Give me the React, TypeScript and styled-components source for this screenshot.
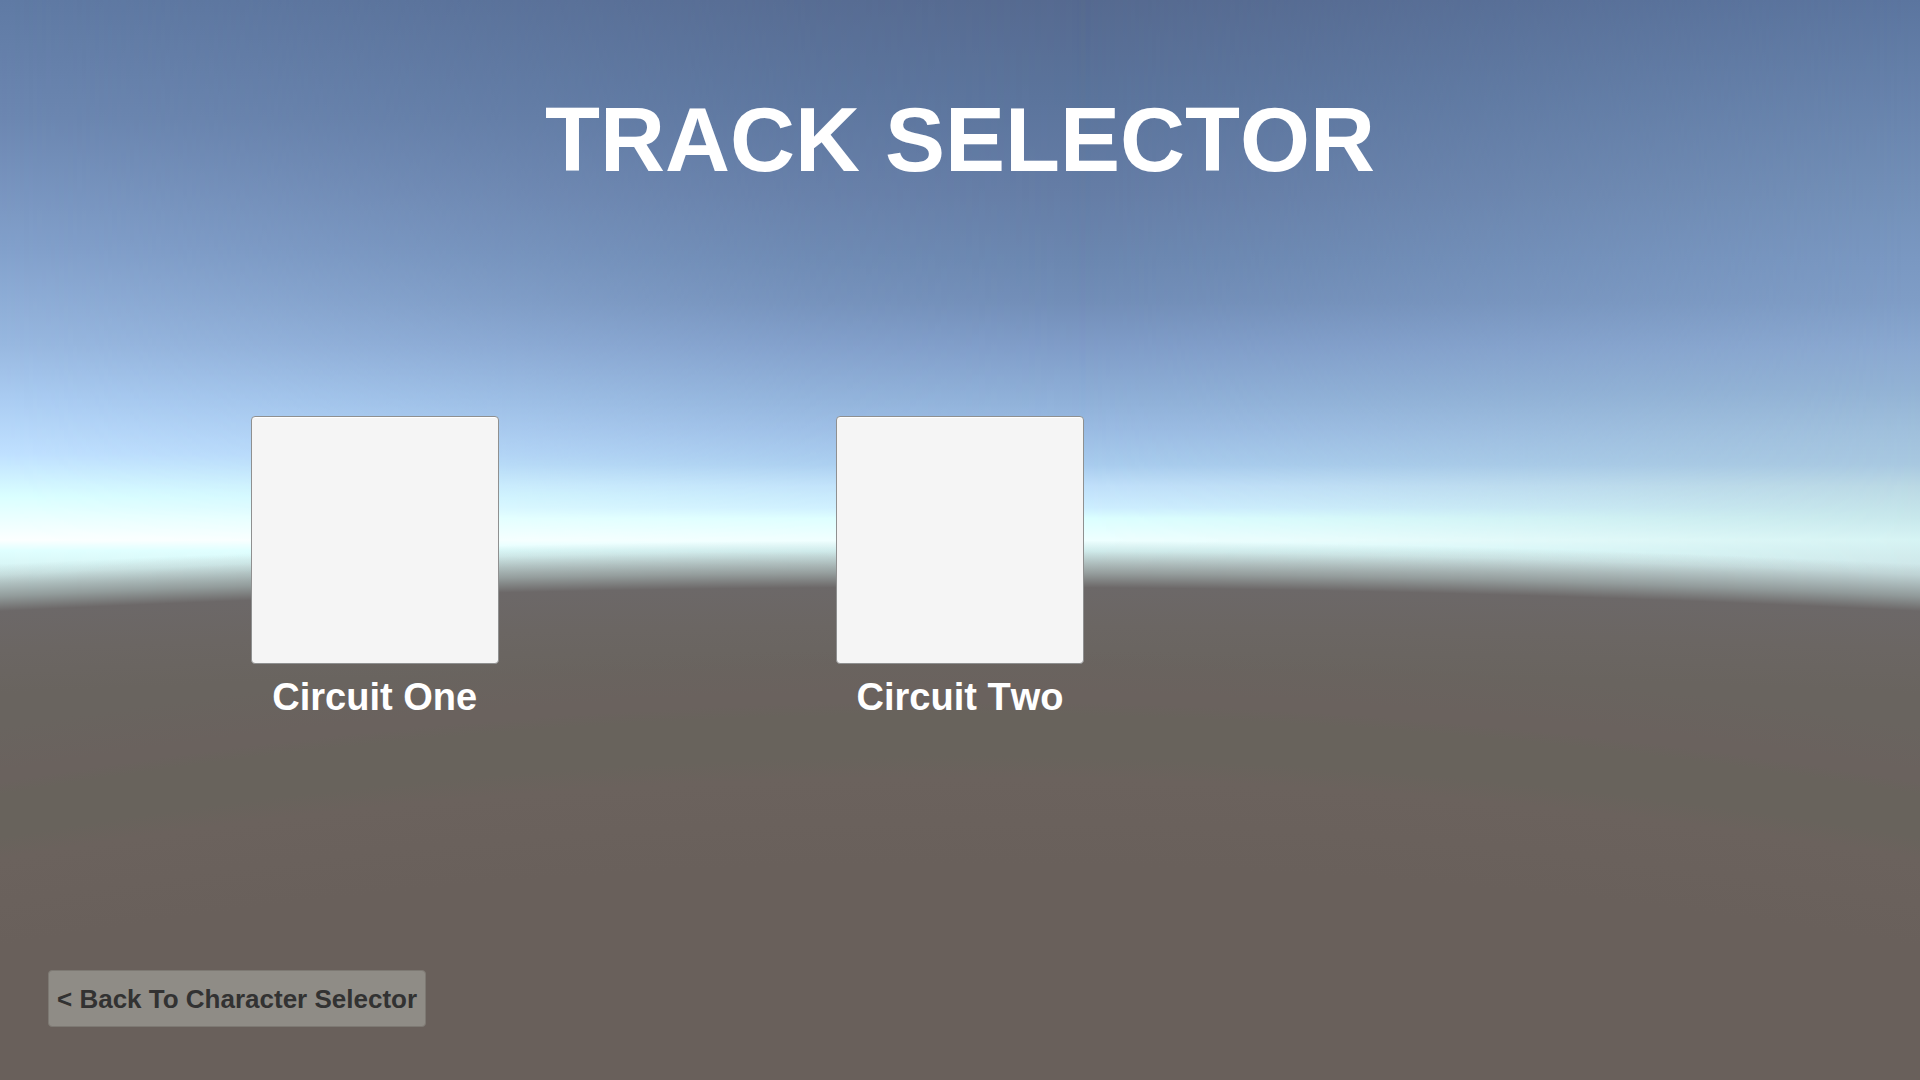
import React from "react";
import styled, { createGlobalStyle } from "styled-components";

const GlobalStyle = createGlobalStyle`
  *, *::before, *::after { box-sizing: border-box; }
  body { margin: 0; }
`;

/* Three vertical colour ramps (left, middle, right) blended across the sky. */
const Sky = styled.div`
  position: absolute;
  inset: 0;
  z-index: -1;
  background: linear-gradient(
    #566a90 0%,
    #5b749c 9%,
    #657da6 18%,
    #6b87b0 24%,
    #728eb8 28%,
    #7f9cc8 32%,
    #8fb0d8 37%,
    #9bbce4 40%,
    #a8ccee 43%,
    #c0e0fa 45%,
    #cdeeff 47%,
    #dcffff 48%,
    #efffff 50%,
    #e0ffff 51%,
    #dcf2f2 53%
  );

  &::before,
  &::after {
    content: "";
    position: absolute;
    inset: 0;
  }

  &::before {
    background: linear-gradient(
      #5f7aa4 0%,
      #6c87b1 11%,
      #82a0cb 23%,
      #98b8e0 32%,
      #aaccf2 37%,
      #bfe0ff 42%,
      #daffff 46%,
      #fcffff 50%,
      #dfffff 51%,
      #d0eaea 54%
    );
    mask-image: linear-gradient(
      to right,
      #000,
      rgba(0, 0, 0, 0.76) 14%,
      rgba(0, 0, 0, 0.48) 28%,
      rgba(0, 0, 0, 0.18) 42%,
      transparent 57%
    );
  }

  &::after {
    background: linear-gradient(
      #5b759f 0%,
      #7390b8 18%,
      #7a98c2 24%,
      #7f9dc6 28%,
      #8aa8d0 32%,
      #92b2d4 36%,
      #a0c0dc 40%,
      #a8c8e0 43%,
      #bad8e4 45%,
      #c8e8ec 48%,
      #d6f4f4 50%,
      #cce4e6 53%
    );
    mask-image: linear-gradient(
      to left,
      #000,
      rgba(0, 0, 0, 0.76) 11%,
      rgba(0, 0, 0, 0.48) 22%,
      rgba(0, 0, 0, 0.2) 33%,
      transparent 44%
    );
  }
`;

/* Ground: rims of very large circles, so the horizon and the bands below it curve. */
const Ground = styled.div`
  position: absolute;
  inset: 0;
  z-index: -1;
  background:
    radial-gradient(
      circle 300vw at 50% calc(66vh + 300vw),
      #69605b calc(300vw - 14vh),
      #6b625d calc(300vw - 6vh),
      #68635c calc(300vw - 4vh),
      #68635c calc(300vw - 1px),
      #6a625e calc(300vw + 1vh),
      #6a625e calc(300vw + 2vh),
      rgba(106, 100, 95, 0) calc(300vw + 6vh)
    ),
    radial-gradient(
      circle 1000vw at 50% calc(54vh + 1000vw),
      #69645f calc(1000vw - 8vh),
      #6b6663 calc(1000vw - 4vh),
      #6c6868 calc(1000vw - 4px),
      rgba(108, 108, 107, 0.62) calc(1000vw + 1vh),
      rgba(108, 108, 107, 0.38) calc(1000vw + 2vh),
      rgba(108, 108, 107, 0.14) calc(1000vw + 3vh),
      rgba(108, 108, 107, 0) calc(1000vw + 4vh)
    );
`;

const Screen = styled.main`
  position: relative;
  z-index: 0;
  min-height: 100vh;
  display: flex;
  flex-direction: column;
  padding: 90px 0 53px;
  font-family: "Liberation Sans", Arial, sans-serif;
  font-weight: bold;
`;

const Title = styled.h1`
  margin: 0 0 226px;
  color: #fff;
  font-size: 90px;
  line-height: 100px;
  font-kerning: none;
  text-align: center;
`;

const TrackGrid = styled.section`
  display: grid;
  grid-template-columns: repeat(3, 1fr);
  padding: 0 82px;
`;

const Track = styled.div`
  display: flex;
  flex-direction: column;
  align-items: center;
  gap: 11px;
`;

const TrackButton = styled.button`
  width: 248px;
  height: 248px;
  padding: 0;
  border: 1px solid #8f9090;
  border-radius: 4px;
  background: #f5f5f5;
  box-shadow: inset 0 1px #fff;
  cursor: pointer;
`;

const TrackName = styled.label`
  color: #fff;
  font-size: 38px;
  line-height: 44px;
  font-kerning: none;
`;

const BackButton = styled.button`
  align-self: flex-start;
  margin: auto 0 0 48px;
  height: 57px;
  padding: 0 8px;
  border: 1px solid #7d7973;
  border-radius: 4px;
  background: #8f8c86;
  color: #323232;
  font: inherit;
  font-size: 26px;
  line-height: 30px;
  cursor: pointer;
`;

const tracks = [
  { id: "circuit-one", name: "Circuit One" },
  { id: "circuit-two", name: "Circuit Two" },
];

export default function App() {
  return (
    <Screen>
      <GlobalStyle />
      <Sky />
      <Ground />
      <Title>TRACK SELECTOR</Title>
      <TrackGrid>
        {tracks.map((track) => (
          <Track key={track.id}>
            <TrackButton id={track.id} type="button" />
            <TrackName htmlFor={track.id}>{track.name}</TrackName>
          </Track>
        ))}
      </TrackGrid>
      <BackButton type="button">&lt; Back To Character Selector</BackButton>
    </Screen>
  );
}
